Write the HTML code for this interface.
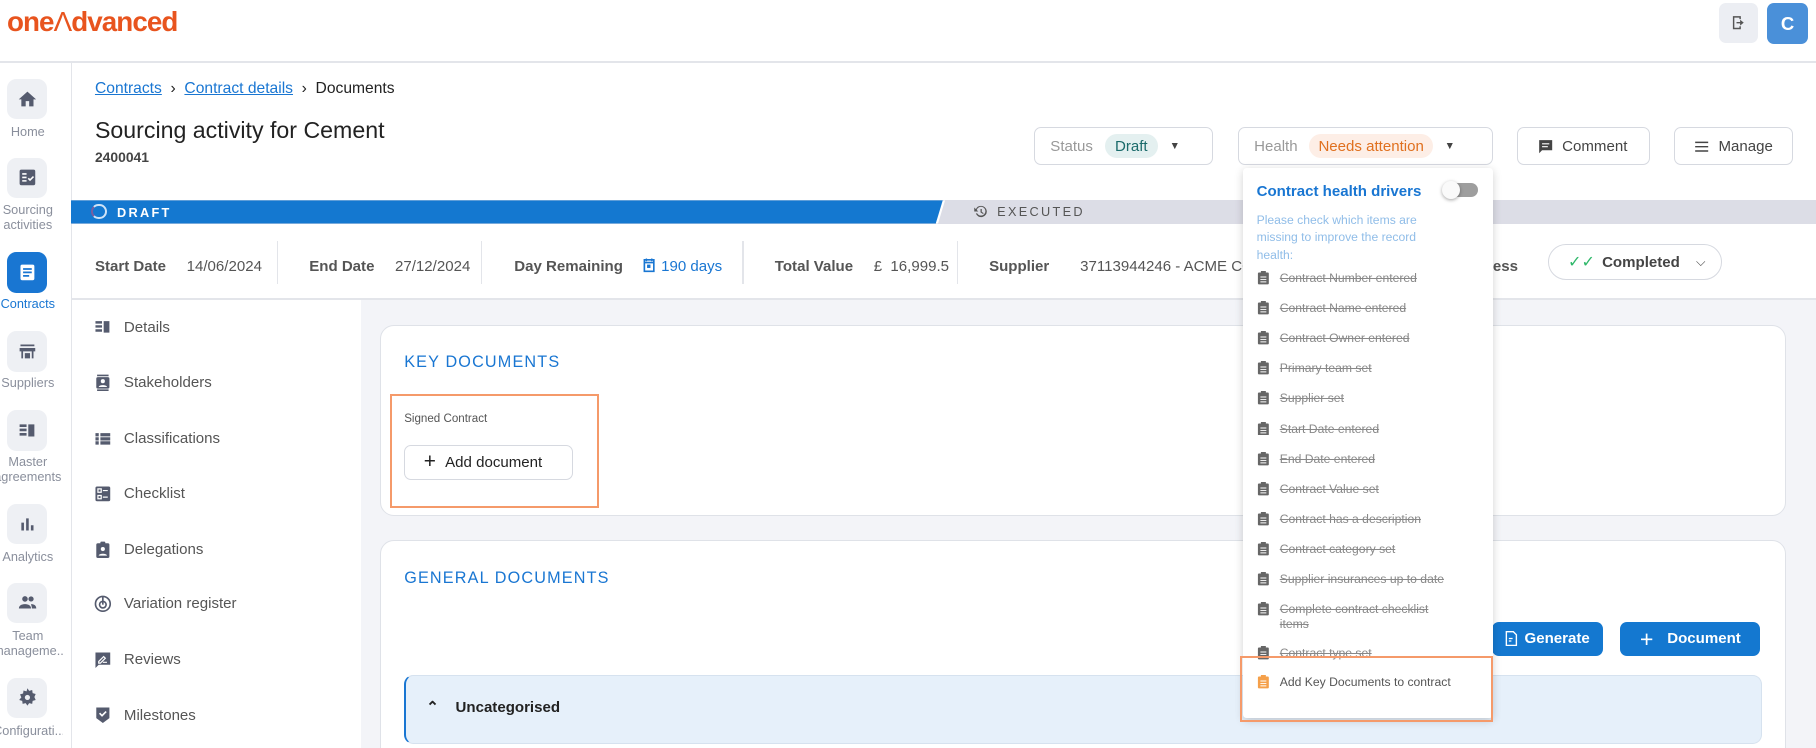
<!DOCTYPE html>
<html><head><meta charset="utf-8"><style>
html,body{margin:0;padding:0;background:#fff;overflow:hidden}
body{zoom:1.15816;width:1568px;height:646px;position:relative;font-family:"Liberation Sans",sans-serif;color:#333}
.a{position:absolute}
.rail{left:0;top:54px;width:61px;height:600px;border-right:1px solid #e3e5ea;background:#fff}
.rb{position:absolute;left:6px;width:35px;height:35px;border-radius:8px;background:#eef0f4;display:flex;align-items:center;justify-content:center}
.rl{position:absolute;left:-6px;width:60px;text-align:center;font-size:11px;color:#8a8f9c;line-height:13px;white-space:nowrap;overflow:hidden}
.btn{position:absolute;border:1px solid #d6d9e0;border-radius:6px;background:#fff;display:flex;align-items:center;font-size:13px;color:#444}
.lbl{font-size:13px;color:#555;font-weight:bold}
.val{font-size:13px;color:#555}
.sep{position:absolute;top:208px;width:1px;height:37px;background:#e3e5ea}
.nav{position:absolute;left:80px;font-size:13px;color:#555;display:flex;align-items:center;gap:10px}
.nav svg{width:17px;height:17px}
.card{position:absolute;background:#fff;border:1px solid #dfe2e8;border-radius:12px}
.h{font-size:14px;color:#1976d2;letter-spacing:1px}
.it{position:absolute;left:1085px;font-size:10.5px;color:#888;text-decoration:line-through;display:flex;gap:9px;align-items:flex-start;line-height:13px;width:190px}
.it svg{flex:none;width:11px;height:12px;margin-top:0}
</style></head><body>
<!-- header -->
<div class="a" style="left:6px;top:5px;font-size:24px;font-weight:bold;color:#e8541e;letter-spacing:-0.8px">one<span style="font-weight:normal">Λ</span>dvanced</div>
<div class="a" style="left:1484px;top:3px;width:34px;height:34px;border-radius:6px;background:#eceef3;display:flex;align-items:center;justify-content:center"><svg width="15" height="15" viewBox="0 0 24 24"><path d="M4 3h11v4h-2V5H6v14h7v-2h2v4H4z M14 8l5 4-5 4v-3H9v-2h5z" fill="#555"/></svg></div>
<div class="a" style="left:1526px;top:3px;width:35px;height:35px;border-radius:6px;background:#4a90d9;color:#fff;font-weight:bold;font-size:16px;display:flex;align-items:center;justify-content:center">C</div>
<div class="a" style="left:0;top:53px;width:1568px;height:1px;background:#e3e5ea"></div>
<!-- rail -->
<div class="a rail"></div>
<div class="rb" style="top:68px"><svg width="18" height="18" viewBox="0 0 24 24"><path d="M10 20v-6h4v6h5v-8h3L12 3 2 12h3v8z" fill="#555b6e"/></svg></div><div class="rl" style="top:107px">Home</div>
<div class="rb" style="top:136px"><svg width="18" height="18" viewBox="0 0 24 24"><rect x="3" y="3" width="18" height="18" rx="2" fill="#555b6e"/><path d="M6 8h5M6 12h5M6 16h5M13 13l2 2 4-4" stroke="#fff" stroke-width="1.8" fill="none"/></svg></div><div class="rl" style="top:174px">Sourcing<br>activities</div>
<div class="rb" style="top:218px;background:#1976d2"><svg width="18" height="18" viewBox="0 0 24 24"><rect x="4" y="3" width="16" height="18" rx="2" fill="#fff"/><path d="M7 8h10M7 12h10M7 16h7" stroke="#1976d2" stroke-width="2"/></svg></div><div class="rl" style="top:256px;color:#1976d2">Contracts</div>
<div class="rb" style="top:286px"><svg width="18" height="18" viewBox="0 0 24 24"><path d="M4 4h16v2H4zM3 8h18v4H3zM5 12h2v8H5zM17 12h2v8h-2zM9 14h6v6H9z" fill="#555b6e"/></svg></div><div class="rl" style="top:324px">Suppliers</div>
<div class="rb" style="top:354px"><svg width="18" height="18" viewBox="0 0 24 24"><path d="M3 5h8v3H3zM3 10h8v3H3zM3 15h8v3H3zM13 5h7v14h-7z" fill="#555b6e"/></svg></div><div class="rl" style="top:392px">Master<br>agreements</div>
<div class="rb" style="top:435px"><svg width="18" height="18" viewBox="0 0 24 24"><path d="M5 10h3v9H5zM10.5 5h3v14h-3zM16 13h3v6h-3z" fill="#555b6e"/></svg></div><div class="rl" style="top:474px">Analytics</div>
<div class="rb" style="top:503px"><svg width="20" height="18" viewBox="0 0 24 24"><circle cx="9" cy="8" r="3.2" fill="#555b6e"/><circle cx="16" cy="8" r="3" fill="#555b6e"/><path d="M2 19c0-4 4-5 7-5s7 1 7 5zM16 14c3 0 6 1 6 5h-5c0-2-1-4-1-5z" fill="#555b6e"/></svg></div><div class="rl" style="top:542px">Team<br>manageme...</div>
<div class="rb" style="top:585px"><svg width="18" height="18" viewBox="0 0 24 24"><path d="M12 1.5l2 3 3.5-1 .5 3.5 3.5 1-1.5 3.5 1.5 3.5-3.5 1-.5 3.5-3.5-1-2 3-2-3-3.5 1-.5-3.5-3.5-1L5 12 3.5 8.5 7 7.5l.5-3.5 3.5 1z" fill="#555b6e"/><circle cx="12" cy="12" r="3" fill="#eef0f4"/></svg></div><div class="rl" style="top:624px">Configurati...</div>
<!-- breadcrumbs -->
<div class="a" style="left:82px;top:69px;font-size:13.5px;color:#222"><span style="color:#1976d2;text-decoration:underline">Contracts</span> &nbsp;›&nbsp; <span style="color:#1976d2;text-decoration:underline">Contract details</span> &nbsp;›&nbsp; Documents</div>
<div class="a" style="left:82px;top:101px;font-size:20px;color:#222">Sourcing activity for Cement</div>
<div class="a" style="left:82px;top:129px;font-size:12px;color:#444;font-weight:bold">2400041</div>
<!-- header buttons -->
<div class="btn" style="left:893px;top:110px;width:153px;height:31px"><span style="margin-left:13px;color:#999">Status</span><span style="margin-left:10px;background:#e4f0f0;color:#1b6b6b;border-radius:12px;padding:3px 9px">Draft</span><span style="margin-left:10px;font-size:9px">▼</span></div>
<div class="btn" style="left:1069px;top:110px;width:218px;height:31px"><span style="margin-left:13px;color:#999">Health</span><span style="margin-left:10px;background:#fdeee6;color:#e0701e;border-radius:12px;padding:3px 8px">Needs attention</span><span style="margin-left:10px;font-size:9px">▼</span></div>
<div class="btn" style="left:1310px;top:110px;width:113px;height:31px"><svg style="margin-left:16px" width="15" height="15" viewBox="0 0 24 24"><path d="M3 3h18v14H7l-4 4z" fill="#444"/><path d="M7 8h10M7 12h8" stroke="#fff" stroke-width="1.6"/></svg><span style="margin-left:7px">Comment</span></div>
<div class="btn" style="left:1445px;top:110px;width:101px;height:31px"><svg style="margin-left:16px" width="15" height="15" viewBox="0 0 24 24"><path d="M3 6h18M3 12h18M3 18h18" stroke="#444" stroke-width="2"/></svg><span style="margin-left:7px">Manage</span></div>
<!-- stage bar -->
<div class="a" style="left:61px;top:173px;width:1507px;height:20px;background:#dcdde6"></div>
<div class="a" style="left:61px;top:173px;width:754px;height:20px;background:#1478d0;clip-path:polygon(0 0,100% 0,calc(100% - 7px) 100%,0 100%)"></div>
<div class="a" style="left:808px;top:173px;width:8px;height:20px;background:#fff;clip-path:polygon(6px 0,100% 0,2px 100%,0 100%)"></div>
<div class="a" style="left:79px;top:176px;width:10px;height:10px;border:2px solid #cfe3f7;border-left-color:#7a5ea0;border-radius:50%"></div>
<div class="a" style="left:101px;top:177px;font-size:11px;color:#fff;font-weight:bold;letter-spacing:2px">DRAFT</div>
<div class="a" style="left:840px;top:176px;font-size:11px;color:#555;letter-spacing:2px;display:flex;align-items:center;gap:8px"><svg width="13" height="13" viewBox="0 0 24 24"><path d="M13 3a9 9 0 1 1-8.5 12h2.2A7 7 0 1 0 6 9.5L8.5 12H2V5.5l2.6 2.6A9 9 0 0 1 13 3zm-1 5h2v4.5l3 2-1 1.5-4-2.6z" fill="#555"/></svg>EXECUTED</div>
<!-- info row -->
<div class="a" style="left:82px;top:219px"><span class="lbl">Start Date</span>&nbsp;&nbsp;&nbsp; <span class="val">14/06/2024</span></div>
<div class="sep" style="left:239px"></div>
<div class="a" style="left:267px;top:219px"><span class="lbl">End Date</span>&nbsp;&nbsp;&nbsp; <span class="val">27/12/2024</span></div>
<div class="sep" style="left:415px"></div>
<div class="a" style="left:444px;top:219px;white-space:nowrap"><span class="lbl">Day Remaining</span><svg style="margin-left:16px;vertical-align:-3px" width="14" height="16" viewBox="0 0 24 24"><path d="M5 4h14v17H5z M5 8h14" fill="none" stroke="#1976d2" stroke-width="2.4"/><path d="M8 2v4M16 2v4" stroke="#1976d2" stroke-width="2"/><rect x="9" y="11" width="5" height="5" fill="#1976d2"/></svg><span style="color:#1976d2;font-size:13px;margin-left:3px">190 days</span></div>
<div class="sep" style="left:641px"></div>
<div class="a" style="left:669px;top:219px"><span class="lbl">Total Value</span>&nbsp;&nbsp;&nbsp; <span class="val">£&nbsp; 16,999.5</span></div>
<div class="sep" style="left:826px"></div>
<div class="a" style="left:854px;top:219px;width:220px;white-space:nowrap;overflow:hidden"><span class="lbl">Supplier</span>&nbsp;&nbsp;&nbsp;&nbsp;&nbsp; <span class="val">37113944246 - ACME CORP</span></div>
<div class="a" style="left:1289px;top:219px"><span class="lbl">ess</span></div>
<div class="btn" style="left:1337px;top:211px;width:148px;height:29px;border-radius:16px"><span style="margin-left:16px;color:#2fb86a;font-size:14px">✓✓</span><span style="margin-left:6px;font-weight:bold;color:#444">Completed</span><span style="margin-left:14px;font-size:11px">⌵</span></div>
<div class="a" style="left:61px;top:257px;width:1507px;height:2px;background:#e3e5ea"></div>
<!-- content bg -->
<div class="a" style="left:312px;top:259px;width:1256px;height:400px;background:#f3f4f8"></div>
<!-- subnav -->
<div class="nav" style="top:274px"><svg viewBox="0 0 24 24"><path d="M3 5h8v3H3zM3 10h8v3H3zM3 15h8v3H3zM13 5h7v14h-7z" fill="#555b6e"/></svg>Details</div>
<div class="nav" style="top:322px"><svg viewBox="0 0 24 24"><path d="M5 2h14v2H5zM5 20h14v2H5z" fill="#555b6e"/><rect x="4" y="5" width="16" height="14" rx="2" fill="#555b6e"/><circle cx="12" cy="10" r="2.5" fill="#fff"/><path d="M7 17c0-3 10-3 10 0z" fill="#fff"/></svg>Stakeholders</div>
<div class="nav" style="top:370px"><svg viewBox="0 0 24 24"><path d="M3 5h4v4H3zM9 5h12v4H9zM3 10h4v4H3zM9 10h12v4H9zM3 15h4v4H3zM9 15h12v4H9z" fill="#555b6e"/></svg>Classifications</div>
<div class="nav" style="top:418px"><svg viewBox="0 0 24 24"><rect x="3" y="3" width="18" height="18" rx="2" fill="#555b6e"/><path d="M6 6h4v4H6zM6 14h4v4H6zM12 8h6M12 16h6" stroke="#fff" stroke-width="1.5" fill="none"/></svg>Checklist</div>
<div class="nav" style="top:466px"><svg viewBox="0 0 24 24"><rect x="4" y="4" width="16" height="18" rx="2" fill="#555b6e"/><rect x="9" y="2" width="6" height="4" rx="1" fill="#555b6e"/><circle cx="12" cy="11" r="2.5" fill="#fff"/><path d="M7 19c0-3 10-3 10 0z" fill="#fff"/></svg>Delegations</div>
<div class="nav" style="top:513px"><svg viewBox="0 0 24 24"><circle cx="12" cy="12" r="9" fill="none" stroke="#555b6e" stroke-width="2"/><circle cx="12" cy="13" r="4" fill="none" stroke="#555b6e" stroke-width="2"/><path d="M12 3v10" stroke="#555b6e" stroke-width="2"/></svg>Variation register</div>
<div class="nav" style="top:561px"><svg viewBox="0 0 24 24"><path d="M3 3h18v15H7l-4 4z" fill="#555b6e"/><path d="M7 14l6-6 2 2-6 6H7zM12 15h5" stroke="#fff" stroke-width="1.5" fill="none"/></svg>Reviews</div>
<div class="nav" style="top:609px"><svg viewBox="0 0 24 24"><path d="M4 3h16v13l-8 6-8-6z" fill="#555b6e"/><path d="M8 10l3 3 5-5" stroke="#fff" stroke-width="2" fill="none"/></svg>Milestones</div>
<!-- key docs -->
<div class="card" style="left:328px;top:281px;width:1212px;height:163px"></div>
<div class="a h" style="left:349px;top:305px">KEY DOCUMENTS</div>
<div class="a" style="left:349px;top:357px;font-size:10px;color:#555">Signed Contract</div>
<div class="btn" style="left:349px;top:384px;width:144px;height:29px;color:#222;font-size:13px"><span style="margin-left:16px;font-size:18px;line-height:14px">+</span><span style="margin-left:8px">Add document</span></div>
<div class="a" style="left:337px;top:340px;width:177px;height:95px;border:2.5px solid #f59a6a"></div>
<!-- general docs -->
<div class="card" style="left:328px;top:466px;width:1212px;height:200px"></div>
<div class="a h" style="left:349px;top:491px">GENERAL DOCUMENTS</div>
<div class="a" style="left:1288px;top:537px;width:96px;height:29px;background:#1478d0;border-radius:6px;color:#fff;font-weight:bold;font-size:13px;display:flex;align-items:center;justify-content:center;gap:6px"><svg width="11" height="13" viewBox="0 0 20 24"><path d="M2 1h11l5 5v17H2z" fill="none" stroke="#fff" stroke-width="2.2"/><path d="M6 12h6M6 16h4" stroke="#fff" stroke-width="2"/></svg>Generate</div>
<div class="a" style="left:1399px;top:537px;width:121px;height:29px;background:#1478d0;border-radius:6px;color:#fff;font-weight:bold;font-size:13px;display:flex;align-items:center;justify-content:center;gap:12px"><span style="font-size:20px;font-weight:normal;line-height:14px">+</span>Document</div>
<div class="a" style="left:349px;top:583px;width:1170px;height:58px;background:#e6f0fa;border:1px solid #d6e2ef;border-left:2px solid #1976d2;border-radius:8px"></div>
<div class="a" style="left:368px;top:603px;font-size:13px;font-weight:bold;color:#222">⌃&nbsp;&nbsp;&nbsp; Uncategorised</div>
<!-- dropdown -->
<div class="a" style="left:1073px;top:145px;width:216px;height:475px;background:#fff;box-shadow:0 2px 8px rgba(0,0,0,.18);border-radius:3px"></div>
<div class="a" style="left:1085px;top:158px;font-size:13px;font-weight:bold;color:#1976d2">Contract health drivers</div>
<div class="a" style="left:1246px;top:158px;width:30px;height:12px;border-radius:7px;background:#9e9e9e"></div>
<div class="a" style="left:1245px;top:156px;width:16px;height:16px;border-radius:50%;background:#fafafa;box-shadow:0 1px 3px rgba(0,0,0,.35)"></div>
<div class="a" style="left:1085px;top:183px;width:170px;font-size:10.5px;line-height:15px;color:#90bde8">Please check which items are missing to improve the record health:</div>
<div class="it" style="top:234px"><svg viewBox="0 0 12 14"><rect x="0.5" y="1.5" width="11" height="12" rx="1" fill="#666"/><rect x="3.5" y="0" width="5" height="3" fill="#666"/><path d="M3 6h6M3 8.5h6M3 11h6" stroke="#fff"/></svg>Contract Number entered</div>
<div class="it" style="top:260px"><svg viewBox="0 0 12 14"><rect x="0.5" y="1.5" width="11" height="12" rx="1" fill="#666"/><rect x="3.5" y="0" width="5" height="3" fill="#666"/><path d="M3 6h6M3 8.5h6M3 11h6" stroke="#fff"/></svg>Contract Name entered</div>
<div class="it" style="top:286px"><svg viewBox="0 0 12 14"><rect x="0.5" y="1.5" width="11" height="12" rx="1" fill="#666"/><rect x="3.5" y="0" width="5" height="3" fill="#666"/><path d="M3 6h6M3 8.5h6M3 11h6" stroke="#fff"/></svg>Contract Owner entered</div>
<div class="it" style="top:312px"><svg viewBox="0 0 12 14"><rect x="0.5" y="1.5" width="11" height="12" rx="1" fill="#666"/><rect x="3.5" y="0" width="5" height="3" fill="#666"/><path d="M3 6h6M3 8.5h6M3 11h6" stroke="#fff"/></svg>Primary team set</div>
<div class="it" style="top:338px"><svg viewBox="0 0 12 14"><rect x="0.5" y="1.5" width="11" height="12" rx="1" fill="#666"/><rect x="3.5" y="0" width="5" height="3" fill="#666"/><path d="M3 6h6M3 8.5h6M3 11h6" stroke="#fff"/></svg>Supplier set</div>
<div class="it" style="top:364px"><svg viewBox="0 0 12 14"><rect x="0.5" y="1.5" width="11" height="12" rx="1" fill="#666"/><rect x="3.5" y="0" width="5" height="3" fill="#666"/><path d="M3 6h6M3 8.5h6M3 11h6" stroke="#fff"/></svg>Start Date entered</div>
<div class="it" style="top:390px"><svg viewBox="0 0 12 14"><rect x="0.5" y="1.5" width="11" height="12" rx="1" fill="#666"/><rect x="3.5" y="0" width="5" height="3" fill="#666"/><path d="M3 6h6M3 8.5h6M3 11h6" stroke="#fff"/></svg>End Date entered</div>
<div class="it" style="top:416px"><svg viewBox="0 0 12 14"><rect x="0.5" y="1.5" width="11" height="12" rx="1" fill="#666"/><rect x="3.5" y="0" width="5" height="3" fill="#666"/><path d="M3 6h6M3 8.5h6M3 11h6" stroke="#fff"/></svg>Contract Value set</div>
<div class="it" style="top:442px"><svg viewBox="0 0 12 14"><rect x="0.5" y="1.5" width="11" height="12" rx="1" fill="#666"/><rect x="3.5" y="0" width="5" height="3" fill="#666"/><path d="M3 6h6M3 8.5h6M3 11h6" stroke="#fff"/></svg>Contract has a description</div>
<div class="it" style="top:468px"><svg viewBox="0 0 12 14"><rect x="0.5" y="1.5" width="11" height="12" rx="1" fill="#666"/><rect x="3.5" y="0" width="5" height="3" fill="#666"/><path d="M3 6h6M3 8.5h6M3 11h6" stroke="#fff"/></svg>Contract category set</div>
<div class="it" style="top:494px"><svg viewBox="0 0 12 14"><rect x="0.5" y="1.5" width="11" height="12" rx="1" fill="#666"/><rect x="3.5" y="0" width="5" height="3" fill="#666"/><path d="M3 6h6M3 8.5h6M3 11h6" stroke="#fff"/></svg>Supplier insurances up to date</div>
<div class="it" style="top:520px"><svg viewBox="0 0 12 14"><rect x="0.5" y="1.5" width="11" height="12" rx="1" fill="#666"/><rect x="3.5" y="0" width="5" height="3" fill="#666"/><path d="M3 6h6M3 8.5h6M3 11h6" stroke="#fff"/></svg><span style="width:145px">Complete contract checklist items</span></div>
<div class="it" style="top:558px"><svg viewBox="0 0 12 14"><rect x="0.5" y="1.5" width="11" height="12" rx="1" fill="#666"/><rect x="3.5" y="0" width="5" height="3" fill="#666"/><path d="M3 6h6M3 8.5h6M3 11h6" stroke="#fff"/></svg>Contract type set</div>
<div class="it" style="top:583px;text-decoration:none;color:#555"><svg viewBox="0 0 12 14"><rect x="0.5" y="1.5" width="11" height="12" rx="1" fill="#f5a04a"/><rect x="3.5" y="0" width="5" height="3" fill="#f5a04a"/><path d="M3 6h6M3 8.5h6M3 11h6" stroke="#fff"/></svg>Add Key Documents to contract</div>
<div class="a" style="left:1071px;top:566px;width:215px;height:54px;border:2.5px solid #f59a6a"></div>
</body></html>
